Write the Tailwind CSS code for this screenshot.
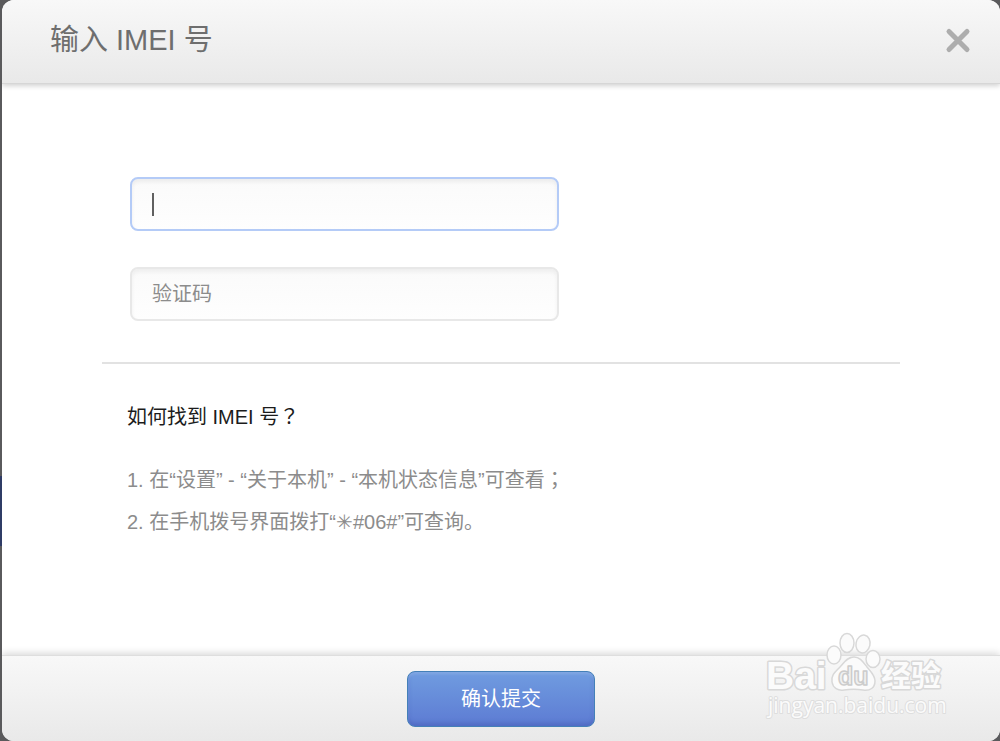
<!DOCTYPE html>
<html lang="zh-CN">
<head>
    <meta charset="UTF-8">
    <meta name="viewport" content="width=device-width, initial-scale=1.0">
    <title>输入 IMEI 号</title>
    <script src="https://cdn.jsdelivr.net/npm/@tailwindcss/browser@4"></script>
</head>

<body class="relative min-h-screen bg-[#5a5a5c] pl-[2px] font-['Liberation_Sans','Noto_Sans_CJK_SC',sans-serif]">

    <!-- page behind the dialog -->
    <div class="absolute left-0 top-[476px] h-[70px] w-[2px] bg-[#2f3c66]"></div>

    <div role="dialog" aria-labelledby="dialog-title" class="relative flex min-h-screen flex-col overflow-hidden rounded-xl bg-white">

        <header class="z-10 flex h-[84px] items-center justify-between border-b border-[#d6d6d6] bg-linear-to-b from-[#f8f8f8] to-[#e9e9e9] pl-12 pr-7 pb-1 shadow-[0_2px_5px_rgba(0,0,0,0.18)]">
            <h1 id="dialog-title" class="text-[29px] leading-10 text-[#6e6e6e]">输入 IMEI 号</h1>
            <button type="button" aria-label="关闭" class="text-[#adadad]">
                <svg class="size-7" viewBox="0 0 28 28" fill="none" stroke="currentColor" stroke-width="5" stroke-linecap="round">
                    <path d="M5 5.500l18 18M23 5.500l-18 18"/>
                </svg>
            </button>
        </header>

        <main class="flex-1 px-[100px] pt-[93px]">
            <form id="imei-form" class="flex flex-col gap-9 border-b-2 border-[#e2e2e2] px-7 pb-[41px]">
                <div class="relative">
                    <input type="text" aria-label="IMEI 号" class="block h-[54px] w-full max-w-[429px] rounded-lg border-2 border-[#b4cbf7] bg-linear-to-b from-[#fafafa] to-[#fefefe] px-5 text-xl text-[#333] caret-transparent shadow-[inset_0_3px_4px_rgba(0,0,0,0.06)] outline-none">
                    <span class="absolute left-[22px] top-4 h-[23px] w-[2px] bg-[#606060]"></span>
                </div>
                <input type="text" aria-label="验证码" placeholder="验证码" class="block h-[54px] w-full max-w-[429px] rounded-lg border-2 border-[#e8e8e8] bg-linear-to-b from-[#fafafa] to-[#fefefe] px-5 text-xl text-[#333] shadow-[inset_0_3px_4px_rgba(0,0,0,0.05)] outline-none placeholder:text-[#8c8c8c]">
            </form>

            <section class="px-[25px] pt-[34px] text-xl">
                <h2 class="leading-9 text-[#1c1c1c]">如何找到 IMEI 号<span lang="zh-TW" class="font-['Noto_Sans_CJK_TC']">？</span></h2>
                <div class="pt-[23px] leading-[42px] text-[#8c8c8c]">
                    <p>1. 在“设置” - “关于本机” - “本机状态信息”可查看<span lang="zh-TW" class="font-['Noto_Sans_CJK_TC']">；</span></p>
                    <p>2. 在手机拨号界面拨打“✳#06#”可查询。</p>
                </div>
            </section>
        </main>

        <footer class="flex h-[86px] items-center justify-center border-t border-[#dedede] bg-linear-to-b from-[#f8f8f8] to-[#e9e9e9] shadow-[0_-2px_7px_rgba(0,0,0,0.15)]">
            <button type="submit" form="imei-form" class="h-14 w-[188px] rounded-lg border border-[#4480b8] bg-linear-to-b from-[#709ce0] to-[#5d7bd3] text-xl text-white shadow-[inset_0_2px_3px_rgba(255,255,255,0.15),inset_0_-3px_4px_rgba(50,70,160,0.3)]">确认提交</button>
        </footer>

        <!-- watermark -->
        <svg class="pointer-events-none absolute bottom-0 right-[50px] h-[121px] w-[190px]" viewBox="0 0 190 121" fill="#fbfbfb" stroke="#d8d8d8" stroke-width="1.500" stroke-linejoin="round">
            <g stroke-width="3" paint-order="stroke">
                <text x="6" y="69" font-family="Liberation Sans, sans-serif" font-size="39" font-weight="700">Bai</text>
                <text x="121" y="66" font-family="Noto Sans CJK SC, sans-serif" font-size="30" font-weight="700">经验</text>
                <text x="8" y="93" font-family="Open Sans, sans-serif" font-size="21" stroke-width="2" stroke="#dedede">jingyan.baidu.com</text>
            </g>
            <ellipse cx="74" cy="35" rx="7" ry="9"/>
            <ellipse cx="87" cy="23" rx="7" ry="9.500"/>
            <ellipse cx="103" cy="24" rx="7" ry="9" transform="rotate(12 103 24)"/>
            <ellipse cx="113" cy="39" rx="7" ry="8.500"/>
            <path d="M94 37c-7 0-10 6-14 10-5 5-9 8-8 15 1 6 6 9 12 8 7-1 12-1 19 0 7 1 12-2 12-9 0-6-4-9-8-14-4-5-7-10-13-10z"/>
            <text x="78" y="65" font-family="Liberation Sans, sans-serif" font-size="25" font-weight="700" fill="#f1f1f1" stroke="#cccccc">du</text>
        </svg>
    </div>

</body>
</html>
